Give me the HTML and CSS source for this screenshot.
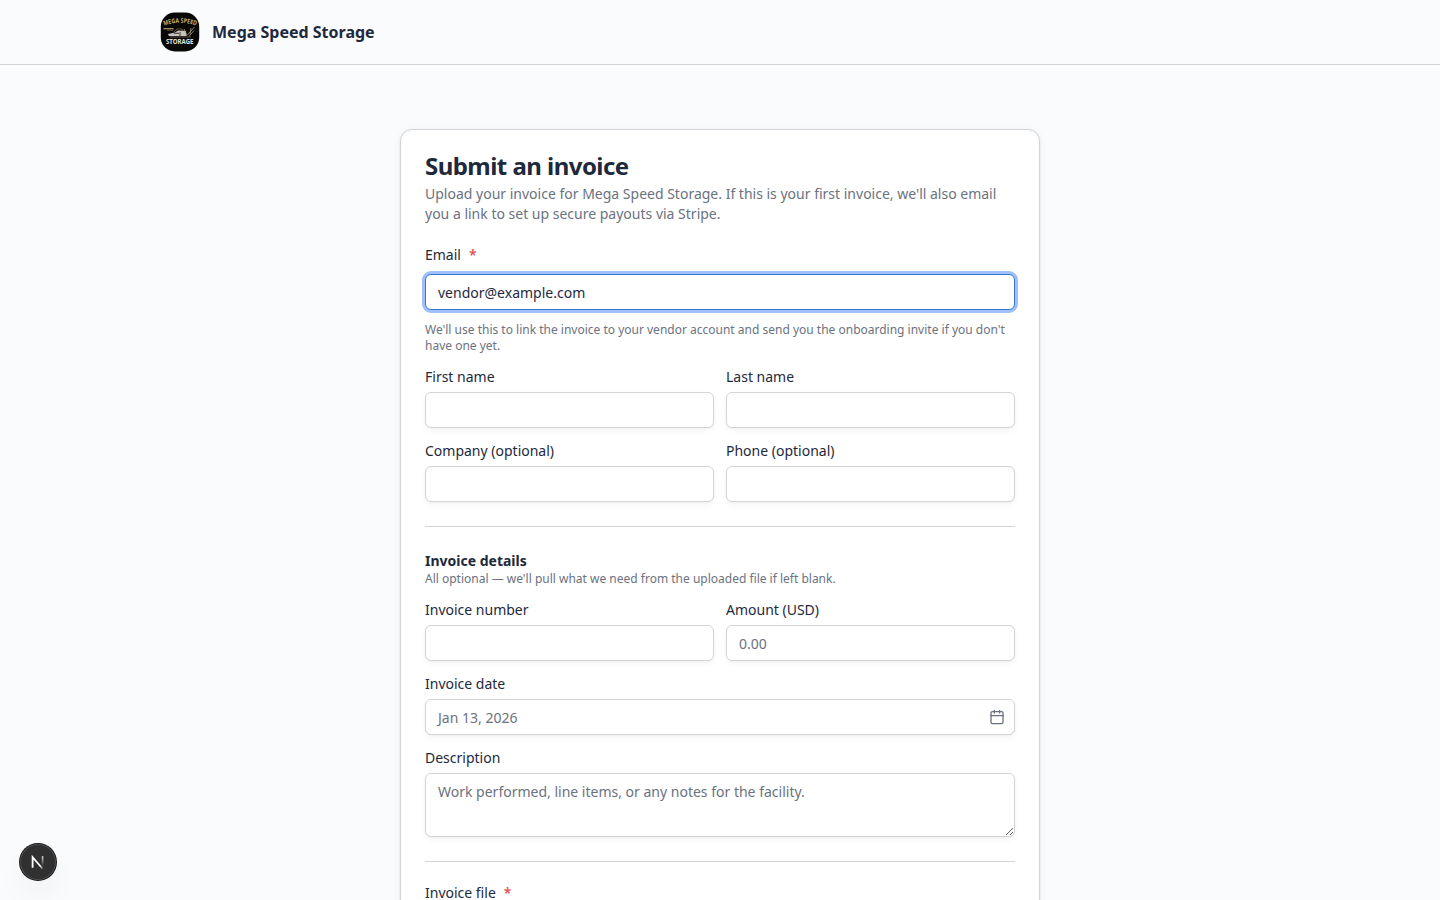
FILE: index.html
```html
<!DOCTYPE html>
<html lang="en">
<head>
<meta charset="utf-8">
<title>Submit an invoice</title>
<link rel="stylesheet" href="styles.css">
</head>
<body>
<header class="topbar">
  <div class="topbar-inner">
    <svg class="logo" width="40" height="40" viewBox="0 0 40 40">
      <rect x=".8" y=".6" width="38.4" height="38.8" rx="14" fill="#080806"/>
      <path id="arc" d="M4 13.6Q20 7.8 36.5 13.6" fill="none"/>
      <text class="logo-arc"><textPath href="#arc" textLength="33" lengthAdjust="spacingAndGlyphs">MEGA SPEED</textPath></text>
      <path d="M3.5 16h10v1.3h-10z" fill="#a78f5b"/>
      <path d="M7 18.2h6" stroke="#776744" stroke-width=".8"/>
      <path d="M14 20l3-3h5l2 4" fill="none" stroke="#62513a"/>
      <path d="M8 22l7-1.5 3-2 8 .5.5 5H9z" fill="#c6c4bc"/>
      <path d="M14 21.3h5M20 20v4" stroke="#393936" stroke-width="1"/>
      <path d="M24 17l3 7M27.5 23l7-8M29 24.5l5-6M31 16l-1 6" stroke="#a99e7f" stroke-width=".8"/>
      <path d="M10 25h21" stroke="#6f665a" stroke-width=".8"/>
      <text class="logo-base" x="6" y="32.3" textLength="27.5" lengthAdjust="spacingAndGlyphs">STORAGE</text>
    </svg>
    <span class="brand">Mega Speed Storage</span>
  </div>
</header>
<main class="page">
  <form class="card">
    <div class="intro">
      <h1>Submit an invoice</h1>
      <p>Upload your invoice for Mega Speed Storage. If this is your first invoice, we'll also email you a link to set up secure payouts via Stripe.</p>
    </div>
    <div class="fields">
      <div class="field field-email">
        <label for="email">Email <span class="required">*</span></label>
        <input class="control focused" id="email" type="text" value="vendor@example.com">
        <p class="hint">We'll use this to link the invoice to your vendor account and send you the onboarding invite if you don't have one yet.</p>
      </div>
      <div class="row">
        <div class="field"><label for="first">First name</label><input class="control" id="first"></div>
        <div class="field"><label for="last">Last name</label><input class="control" id="last"></div>
      </div>
      <div class="row">
        <div class="field"><label for="company">Company (optional)</label><input class="control" id="company"></div>
        <div class="field"><label for="phone">Phone (optional)</label><input class="control" id="phone"></div>
      </div>
    </div>
    <hr>
    <div class="fields">
      <div>
        <h2>Invoice details</h2>
        <p class="hint">All optional — we'll pull what we need from the uploaded file if left blank.</p>
      </div>
      <div class="row">
        <div class="field"><label for="number">Invoice number</label><input class="control" id="number"></div>
        <div class="field"><label for="amount">Amount (USD)</label><input class="control" id="amount" placeholder="0.00"></div>
      </div>
      <div class="field">
        <label for="date">Invoice date</label>
        <div class="control date" id="date">
          <span class="date-value">Jan 13, 2026</span>
          <svg width="16" height="16" viewBox="0 0 24 24" fill="none" stroke="currentColor" stroke-width="2" stroke-linecap="round" stroke-linejoin="round"><path d="M8 2v4M16 2v4M3 10h18"/><rect x="3" y="4" width="18" height="18" rx="2"/></svg>
        </div>
      </div>
      <div class="field">
        <label for="description">Description</label>
        <textarea class="control area" id="description" placeholder="Work performed, line items, or any notes for the facility."></textarea>
      </div>
    </div>
    <hr>
    <div class="field">
      <label>Invoice file <span class="required">*</span></label>
    </div>
  </form>
</main>
<div class="dev-badge">
  <svg width="36" height="36" viewBox="0 0 36 36" fill="none">
    <defs>
      <linearGradient id="diag" x1="12" y1="12" x2="24" y2="25" gradientUnits="userSpaceOnUse"><stop offset=".7" stop-color="#fff"/><stop offset="1" stop-color="#fff" stop-opacity="0"/></linearGradient>
      <linearGradient id="stem" x1="0" y1="12" x2="0" y2="22" gradientUnits="userSpaceOnUse"><stop stop-color="#fff" stop-opacity=".85"/><stop offset="1" stop-color="#fff" stop-opacity="0"/></linearGradient>
    </defs>
    <path d="M12.6 23.8V13.2L22.8 25" stroke="url(#diag)" stroke-width="1.8"/>
    <path d="M22.6 12.2v9.8" stroke="url(#stem)" stroke-width="1.6"/>
  </svg>
</div>
</body>
</html>
```

FILE: styles.css
```css
* { box-sizing: border-box; }
body {
  margin: 0;
  height: 900px;
  overflow: hidden;
  background: #fafbfd;
  color: #1e293b;
  font-family: "Noto Sans", sans-serif;
  font-size: 14px;
  line-height: 20px;
}
h1, h2, p { margin: 0; }
.topbar { border-bottom: 1px solid #d2d4d7; }
.topbar-inner {
  display: flex;
  align-items: center;
  gap: 12px;
  width: 1120px;
  height: 64px;
  margin: 0 auto;
}
.logo { display: block; }
.logo-arc { font: bold 6.4px "Noto Sans", sans-serif; fill: #c6ad72; }
.logo-base { font: bold 6.8px "Noto Sans", sans-serif; fill: #e2e0db; }
.brand { font-size: 16px; line-height: 24px; font-weight: 700; }
.page { padding-top: 64px; }
.card {
  width: 640px;
  margin: 0 auto;
  padding: 24px;
  background: #fff;
  border: 1px solid #d2d4d7;
  border-radius: 12px;
  box-shadow: 0 1px 3px rgba(0, 0, 0, .08), 0 2px 8px rgba(0, 0, 0, .05);
}
.intro { display: grid; gap: 6px; margin-bottom: 24px; color: #6b7280; }
h1 { font-size: 24px; line-height: 24px; font-weight: 700; letter-spacing: -.54px; color: #1e293b; }
h2 { font-size: 14px; line-height: 20px; font-weight: 700; }
.fields { display: grid; gap: 16px; }
.row { display: grid; grid-template-columns: 1fr 1fr; gap: 12px; }
.field { display: grid; gap: 8px; }
.field-email { gap: 12px; }
label { display: flex; gap: 8px; line-height: 14px; font-weight: 400; }
.required { color: #e0524f; font-weight: 600; }
.hint { font-size: 12px; line-height: 16px; color: #6b7280; }
.control {
  display: block;
  width: 100%;
  height: 36px;
  padding: 4px 12px;
  background: #fff;
  border: 1px solid #d2d4d7;
  border-radius: 6px;
  box-shadow: 0 1px 2px rgba(0, 0, 0, .03), 0 3px 7px rgba(0, 0, 0, .04);
  color: #1e293b;
  font: inherit;
  outline: none;
}
.control::placeholder { color: #6b7280; }
.focused { border-color: #3b76d6; box-shadow: 0 0 0 3px #a0c0f8; }
.date { display: flex; align-items: center; justify-content: space-between; padding-right: 9px; color: #6b7280; }
.date-value { padding-top: 2px; }
.area { height: 64px; padding: 8px 12px; resize: vertical; }
hr { width: 100%; height: 1px; margin: 24px 0; border: 0; background: #d2d4d7; }
.dev-badge {
  position: fixed;
  left: 20px;
  bottom: 20px;
  width: 36px;
  height: 36px;
  border-radius: 50%;
  background: #303030;
  box-shadow: inset 0 0 0 1px #4b4b4b, 0 0 0 1px #171717, 0 16px 32px -8px rgba(0, 0, 0, .14);
}
.dev-badge svg { display: block; }
```
